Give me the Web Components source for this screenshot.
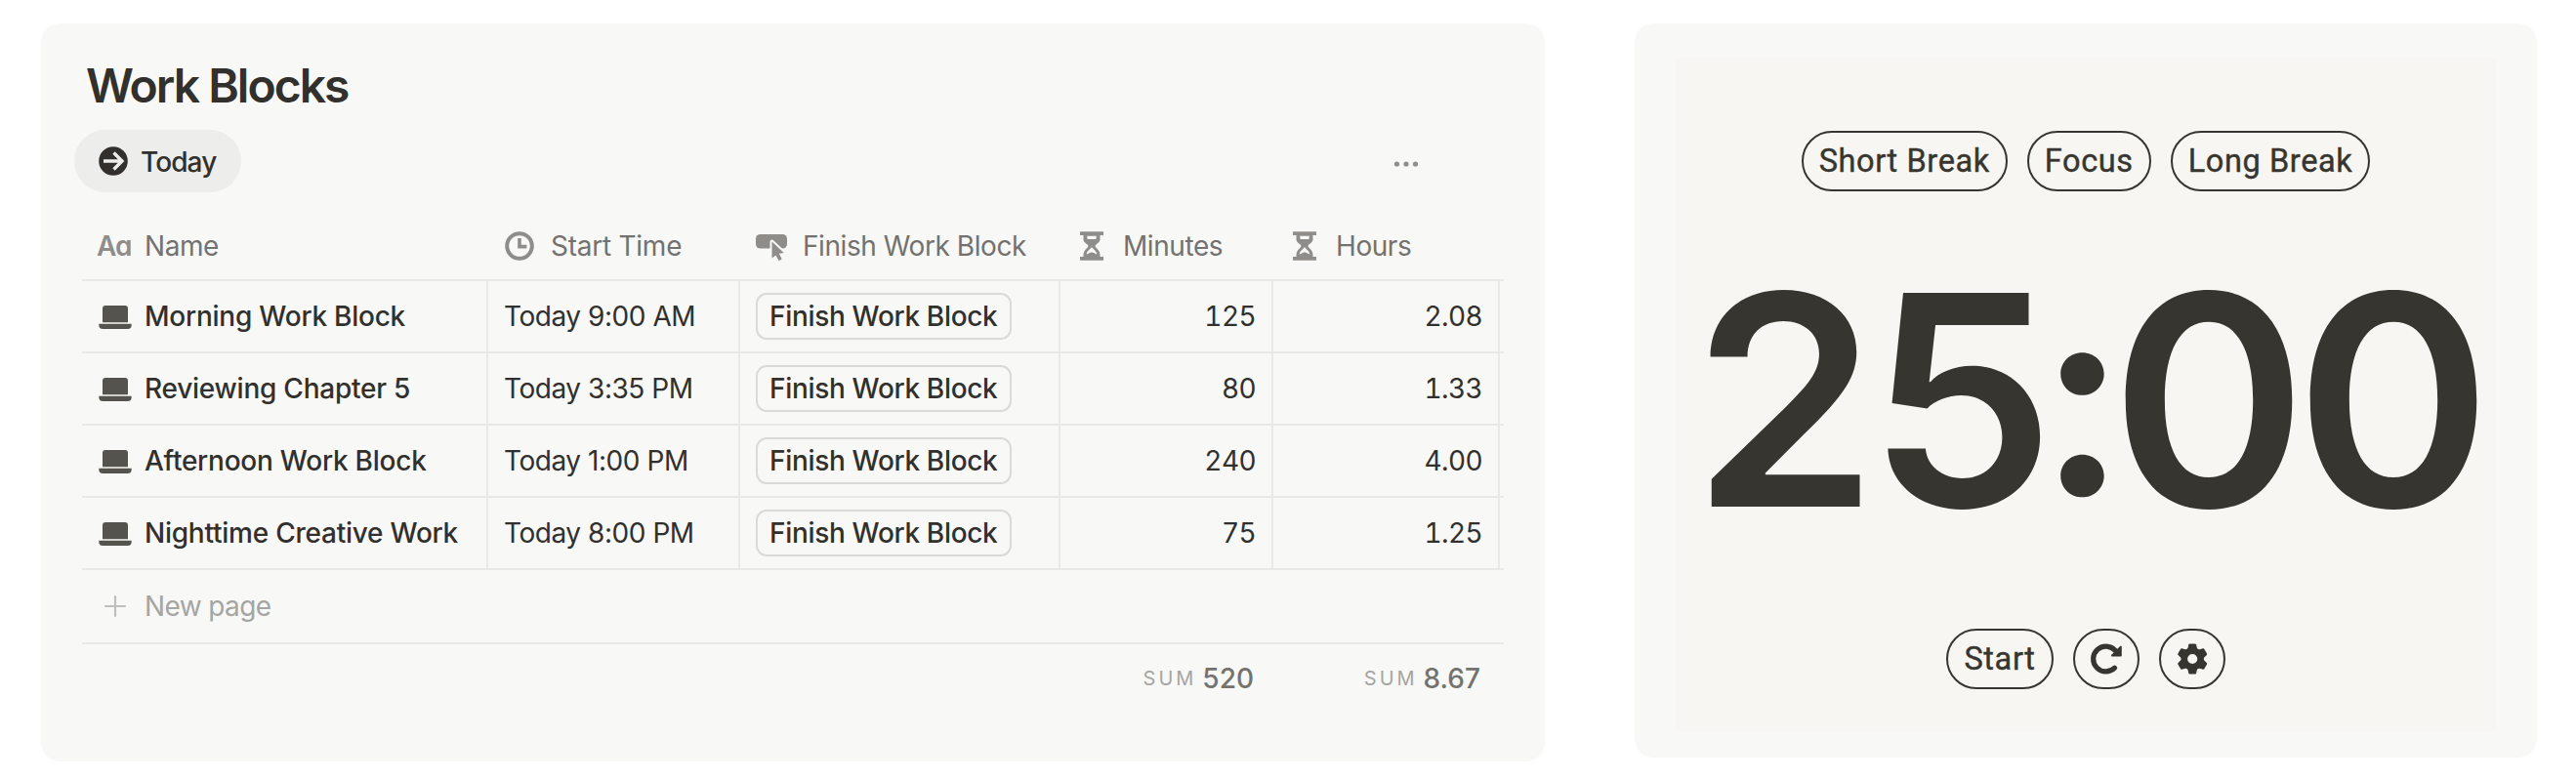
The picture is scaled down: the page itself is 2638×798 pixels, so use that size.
<!DOCTYPE html>
<html lang="en">
<head>
<meta charset="utf-8">
<title>Work Blocks</title>
<style>
  body {
    margin: 0;
    background: #ffffff;
    color: #32302c;
    font-family: Inter, "Liberation Sans", sans-serif;
    font-size: 28px;
  }

  main {
    display: flex;
    align-items: flex-start;
    gap: 92px;
    padding: 24px 40px 0 42px;
  }

  .blocks {
    width: 1540px;
    height: 756px;
  }

  .timer {
    width: 924px;
    height: 752px;
  }
</style>
</head>
<body>

<main>
  <surface-card class="blocks">
    <work-table heading="Work Blocks" view="Today"></work-table>
  </surface-card>
  <surface-card class="timer">
    <focus-timer>
      <pill-button slot="modes">Short Break</pill-button>
      <pill-button slot="modes">Focus</pill-button>
      <pill-button slot="modes">Long Break</pill-button>
      <pill-button slot="actions">Start</pill-button>
      <pill-button slot="actions"><app-icon name="restart"></app-icon></pill-button>
      <pill-button slot="actions"><app-icon name="gear"></app-icon></pill-button>
    </focus-timer>
  </surface-card>
</main>

<script>
const icons = {
  arrow: [30, 30, `
    <circle cx="15" cy="15" r="14.8" fill="currentColor"/>
    <path d="M5 15H24M15.5 6.5L24 15l-8.5 8.5" fill="none" stroke="#ededeb" stroke-width="3.4"/>`],
  more: [20, 6, `
    <g fill="currentColor"><circle cx="0.5" cy="3" r="2.6"/><circle cx="10" cy="3" r="2.6"/><circle cx="19.5" cy="3" r="2.6"/></g>`],
  clock: [30, 30, `
    <circle cx="15" cy="15" r="12.8" fill="none" stroke="currentColor" stroke-width="4"/>
    <path d="M15 7v8.6h7.4" fill="none" stroke="currentColor" stroke-width="3.6"/>`],
  button: [30, 30, `
    <rect x="-1" y="3" width="32" height="14.6" rx="4.6" fill="currentColor"/>
    <path d="M15.5 10.5V27.5l4-3 3 5.5 3.2-1.6-2.8-5.6 4.8-.8z" fill="currentColor" stroke="#f8f8f7" stroke-width="4" paint-order="stroke" stroke-linejoin="round"/>`],
  hourglass: [30, 30, `
    <g transform="translate(3 0)" fill="currentColor">
      <path d="M0 .2h24v3.7H0zM0 26h24v3.8H0z"/>
      <path fill-rule="evenodd" d="M3.5 3.5h17V8c0 4-5 5.2-5 7s5 4 5 9v3h-17v-3c0-5 5-7.2 5-9s-5-3-5-7zM7.3 4.7v2c0 .9.4 1.3 1.3 1.3h6.8c.9 0 1.3-.4 1.3-1.3v-2zM12 16.3c-1.5 2-5 3.5-5.2 7.2 2.2-.6 2.7-2 5.2-2s3 1.4 5.2 2C17 19.8 13.5 18.3 12 16.3z"/>
    </g>`],
  laptop: [30, 24, `
    <path d="M4 3a3 3 0 0 1 3-3h20a3 3 0 0 1 3 3v14.3H4zM.3 18.8h33.4v1.2a4 4 0 0 1-4 4H4.3a4 4 0 0 1-4-4z" fill="currentColor"/>`],
  plus: [30, 30, `
    <path d="M17 5v20M7 15h20" fill="none" stroke="#c0bfbb" stroke-width="2.2" stroke-linecap="round"/>`],
  restart: [32, 32, `
    <path d="M24.6 25.2A12.9 12.9 0 1 1 25 7.2l2.5 2.5" fill="none" stroke="currentColor" stroke-width="5.2" stroke-linecap="round"/>
    <path d="M30.8 3.6v8.8h-8.8z" fill="currentColor" stroke="currentColor" stroke-width="2" stroke-linejoin="round"/>`],
  gear: [32, 32, `
    <g transform="translate(16.2 16)">
      <circle r="8.4" fill="none" stroke="currentColor" stroke-width="6.6"/>
      <g fill="currentColor">${[0, 60, 120, 180, 240, 300].map(angle => `
        <path transform="rotate(${angle})" d="M-5.4-8.5l1.6-6.2q.3-.9 1.2-.9h5.2q.9 0 1.2.9l1.6 6.2z"/>`).join('')}
      </g>
    </g>`]
};

class AppIcon extends HTMLElement {
  connectedCallback() {
    const [width, height, shapes] = icons[this.getAttribute('name')];

    this.attachShadow({mode: 'open'}).innerHTML = `
      <style>
        :host {
          display: block;
          flex: none;
        }

        svg {
          display: block;
          overflow: visible;
        }
      </style>
      <svg width="${width}" height="${height}" viewBox="0 0 ${width} ${height}" aria-hidden="true">${shapes}</svg>
    `;
  }
}

class SurfaceCard extends HTMLElement {
  constructor() {
    super();

    this.attachShadow({mode: 'open'}).innerHTML = `
      <style>
        :host {
          display: block;
          flex: none;
          box-sizing: border-box;
          background: #f8f8f7;
          border-radius: 20px;
        }
      </style>
      <slot></slot>
    `;
  }
}

class ViewTab extends HTMLElement {
  constructor() {
    super();

    this.attachShadow({mode: 'open'}).innerHTML = `
      <style>
        :host {
          display: flex;
          align-items: center;
          gap: 13px;
          box-sizing: border-box;
          width: 171px;
          height: 64px;
          padding-left: 25px;
          border-radius: 32px;
          background: #ededeb;
          font-weight: 500;
          letter-spacing: -.9px;
        }

        span {
          padding-top: 2px;
        }
      </style>
      <app-icon name="arrow"></app-icon>
      <span><slot></slot></span>
    `;
  }
}

class PropertyHead extends HTMLElement {
  connectedCallback() {
    const icon = this.getAttribute('icon');

    this.attachShadow({mode: 'open'}).innerHTML = `
      <style>
        :host {
          display: flex;
          align-items: center;
          gap: 17px;
          padding-left: 17px;
          color: #73726e;
          letter-spacing: -.43px;
          white-space: nowrap;
        }

        :host([icon="clock"]) {
          letter-spacing: -.25px;
        }

        app-icon,
        .title {
          color: #8e8d8a;
        }

        .title {
          width: 30px;
          margin-left: -2px;
          margin-right: 2px;
          font-weight: 600;
          letter-spacing: -1px;
          font-feature-settings: "cv11";
        }
      </style>
      ${icon === 'title' ? '<span class="title">Aa</span>' : `<app-icon name="${icon}"></app-icon>`}
      <span><slot></slot></span>
    `;
  }
}

class ActionButton extends HTMLElement {
  constructor() {
    super();

    this.attachShadow({mode: 'open'}).innerHTML = `
      <style>
        :host {
          display: flex;
          align-items: center;
          box-sizing: border-box;
          width: 262px;
          height: 48px;
          padding-left: 12px;
          border: 2px solid #dadad8;
          border-radius: 11px;
          font-weight: 500;
          letter-spacing: -.33px;
          white-space: nowrap;
        }
      </style>
      <slot></slot>
    `;
  }
}

class ColumnSum extends HTMLElement {
  constructor() {
    super();

    this.attachShadow({mode: 'open'}).innerHTML = `
      <style>
        :host {
          display: flex;
          align-items: center;
          justify-content: flex-end;
          gap: 6px;
          padding-right: 20px;
          color: #73726e;
          font-weight: 500;
          letter-spacing: 0;
        }

        small {
          color: #a5a5a2;
          font-size: 20px;
          font-weight: 400;
          letter-spacing: 3px;
        }
      </style>
      <small>SUM</small>
      <span><slot></slot></span>
    `;
  }
}

class WorkTable extends HTMLElement {
  constructor() {
    super();

    this.columns = [
      ['title', 'Name'],
      ['clock', 'Start Time'],
      ['button', 'Finish Work Block'],
      ['hourglass', 'Minutes'],
      ['hourglass', 'Hours']
    ];

    this.blocks = [
      ['Morning Work Block', 'Today 9:00 AM', '125', '2.08'],
      ['Reviewing Chapter 5', 'Today 3:35 PM', '80', '1.33'],
      ['Afternoon Work Block', 'Today 1:00 PM', '240', '4.00'],
      ['Nighttime Creative Work', 'Today 8:00 PM', '75', '1.25']
    ];

    this.attachShadow({mode: 'open'});
  }

  connectedCallback() {
    this.shadowRoot.innerHTML = `
      <style>
        :host {
          display: block;
          padding: 33px 42px 0;
        }

        h2 {
          margin: 0 0 15px 4px;
          font-size: 48px;
          font-weight: 600;
          line-height: 61px;
          letter-spacing: -1.97px;
        }

        .toolbar {
          display: flex;
          align-items: center;
          justify-content: space-between;
          margin: 0 90px 21px -8px;
        }

        .toolbar app-icon {
          margin-top: 6px;
          color: #8e8d8a;
        }

        .row {
          display: grid;
          grid-template-columns: 416px 258px 328px 218px 232px 4px;
          box-sizing: border-box;
          height: 74px;
          border-bottom: 2px solid #e9e9e7;
        }

        .head {
          height: 70px;
        }

        .cell {
          display: flex;
          align-items: center;
          box-sizing: border-box;
          padding: 0 16px;
          border-right: 2px solid #e9e9e7;
          letter-spacing: -.45px;
          white-space: nowrap;
        }

        .name {
          gap: 17px;
          padding: 0 0 0 17px;
          font-weight: 500;
          letter-spacing: -.24px;
        }

        .name app-icon {
          padding-top: 2px;
          color: #55534e;
        }

        .number {
          justify-content: flex-end;
          font-variant-numeric: tabular-nums;
          letter-spacing: -.6px;
        }

        .new {
          height: 76px;
          color: #a5a5a2;
        }

        .new .cell {
          border: 0;
          font-weight: 400;
          letter-spacing: -.6px;
        }

        .new app-icon {
          padding: 0;
        }

        .foot {
          height: 70px;
          border: 0;
        }
      </style>

      <h2>${this.getAttribute('heading')}</h2>

      <div class="toolbar">
        <view-tab>${this.getAttribute('view')}</view-tab>
        <app-icon name="more"></app-icon>
      </div>

      <div class="row head">
        ${this.columns.map(([icon, label]) => `<property-head icon="${icon}">${label}</property-head>`).join('')}
      </div>

      ${this.blocks.map(block => this.row(block)).join('')}

      <div class="row new">
        <div class="cell name"><app-icon name="plus"></app-icon><span>New page</span></div>
      </div>

      <div class="row foot">
        <span></span><span></span><span></span>
        <column-sum>520</column-sum>
        <column-sum>8.67</column-sum>
      </div>
    `;
  }

  row([name, start, minutes, hours]) {
    return `
      <div class="row">
        <div class="cell name"><app-icon name="laptop"></app-icon><span>${name}</span></div>
        <div class="cell">${start}</div>
        <div class="cell"><action-button>Finish Work Block</action-button></div>
        <div class="cell number">${minutes}</div>
        <div class="cell number">${hours}</div>
      </div>`;
  }
}

class PillButton extends HTMLElement {
  constructor() {
    super();

    this.attachShadow({mode: 'open'}).innerHTML = `
      <style>
        :host {
          display: flex;
          align-items: center;
          box-sizing: border-box;
          height: 62px;
          padding: 0 16px;
          border: 2px solid #37352f;
          border-radius: 31px;
          font-family: Roboto, sans-serif;
          font-size: 32.5px;
          font-weight: 400;
          letter-spacing: .6px;
          white-space: nowrap;
          -webkit-text-stroke: .4px currentColor;
        }
      </style>
      <slot></slot>
    `;
  }
}

class FocusTimer extends HTMLElement {
  constructor() {
    super();

    this.attachShadow({mode: 'open'}).innerHTML = `
      <style>
        :host {
          display: flex;
          flex-direction: column;
          align-items: center;
          justify-content: space-between;
          box-sizing: border-box;
          width: 840px;
          height: 692px;
          margin: 34px 42px;
          padding: 76px 0 44px;
          border-radius: 4px;
          background: #f7f6f2;
          color: #37352f;
        }

        .group {
          display: flex;
          gap: 20px;
        }

        .clock {
          margin-bottom: 21px;
          font-size: 301px;
          font-weight: 600;
          line-height: 1;
          font-feature-settings: "calt" 0;
          white-space: nowrap;
          transform: scaleX(1.013);
        }

        .tens {
          letter-spacing: -10px;
        }

        .units {
          letter-spacing: -17px;
        }

        .colon {
          font-size: 280px;
          letter-spacing: -16px;
          vertical-align: 12px;
        }

        .seconds {
          letter-spacing: -12px;
        }
      </style>

      <div class="group"><slot name="modes"></slot></div>
      <div class="clock"><span class="tens">2</span><span class="units">5</span><span class="colon">:</span><span class="seconds">00</span></div>
      <div class="group"><slot name="actions"></slot></div>
    `;
  }
}

customElements.define('app-icon', AppIcon);
customElements.define('surface-card', SurfaceCard);
customElements.define('view-tab', ViewTab);
customElements.define('property-head', PropertyHead);
customElements.define('action-button', ActionButton);
customElements.define('column-sum', ColumnSum);
customElements.define('work-table', WorkTable);
customElements.define('pill-button', PillButton);
customElements.define('focus-timer', FocusTimer);
</script>
</body>
</html>
